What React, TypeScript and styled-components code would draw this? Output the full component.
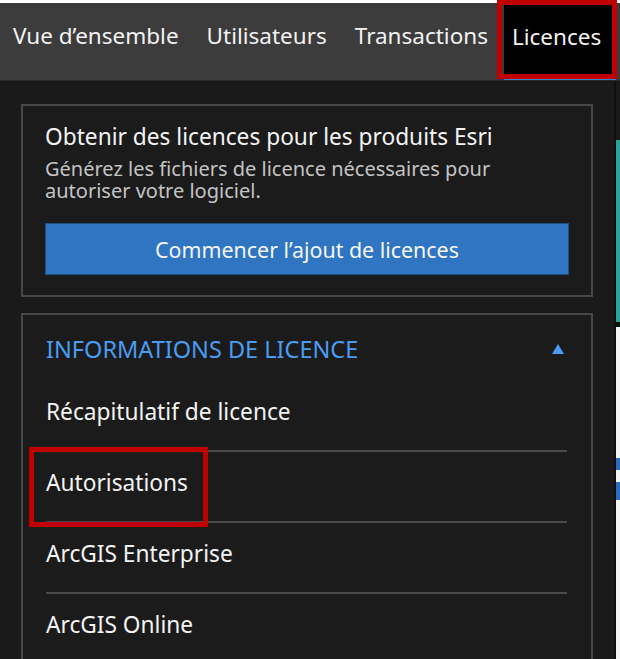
import React from "react";
import styled, { createGlobalStyle } from "styled-components";

const Global = createGlobalStyle`
  html, body { margin: 0; padding: 0; background: #1a1a1a; }
  body { font-family: "Noto Sans", "Lato", sans-serif; -webkit-font-smoothing: antialiased; }
  * { box-sizing: border-box; }
`;

const Page = styled.div`
  position: relative;
  width: 620px;
  height: 659px;
  overflow: hidden;
  background: #1a1a1a;
  display: flex;
  flex-direction: column;
`;

const Nav = styled.nav`
  flex-shrink: 0;
  display: flex;
  height: 81px;
  background: #3c3c3c;
  border-top: 3px solid #ffffff;
  border-bottom: 1px solid #2a2a2a;
`;

const Tab = styled.div<{ $active?: boolean }>`
  display: flex;
  align-items: center;
  padding: 0 14px 10px;
  font-size: 22.5px;
  color: #f2f2f2;
  white-space: nowrap;
  background: ${(p) => (p.$active ? "#000000" : "transparent")};
  border-bottom: 3px solid ${(p) => (p.$active ? "#3b82d6" : "transparent")};
  &:first-child { padding-left: 13px; }
  ${(p) => (p.$active ? "padding: 0 8px 7px 8px; margin-left: 2px; margin-right: 4px; flex: 1;" : "")}
`;

const Body = styled.div`
  flex: 1;
  display: flex;
  min-height: 0;
`;

const Main = styled.main`
  width: 614px;
  flex-shrink: 0;
  padding: 23px 21px 0;
  display: flex;
  flex-direction: column;
  gap: 16px;
`;

const Edge = styled.div`
  flex: 1;
  display: flex;
  flex-direction: column;
  background: #111;
`;

const EdgeSeg = styled.div<{ $h: number; $c: string }>`
  flex-shrink: 0;
  height: ${(p) => p.$h}px;
  border-left: 2px solid #0e0e0e;
  background: ${(p) => p.$c};
`;

const Card = styled.section<{ $open?: boolean }>`
  flex-shrink: 0;
  border: 2px solid #474747;
  background: #1b1b1b;
  ${(p) => (p.$open ? "border-bottom: none; flex: 1 0 auto;" : "")}
`;

const PromoBody = styled.div`
  padding: 17px 22px 20px;
  display: flex;
  flex-direction: column;
`;

const Title = styled.h2`
  margin: 0;
  font-size: 22.7px;
  font-weight: 400;
  line-height: 28px;
  color: #f3f3f3;
  white-space: nowrap;
`;

const Desc = styled.p`
  margin: 7px 0 0;
  font-size: 20px;
  line-height: 22px;
  color: #c4c4c4;
  max-width: 480px;
`;

const Button = styled.button`
  margin-top: 21px;
  height: 52px;
  width: 100%;
  border: 1px solid #1e4f85;
  background: #2f75c1;
  color: #f5f5f5;
  font-family: inherit;
  font-size: 21.4px;
  cursor: pointer;
`;

const AccHeader = styled.div`
  display: flex;
  align-items: center;
  justify-content: space-between;
  height: 68px;
  padding: 0 27px 0 23px;
  color: #4a9cf3;
  font-size: 23.5px;
`;

const List = styled.ul`
  list-style: none;
  margin: 0;
  padding: 0 24px 0 23px;
`;

const Item = styled.li`
  height: 71px;
  display: flex;
  align-items: center;
  padding-bottom: 9px;
  font-size: 22.7px;
  color: #f3f3f3;
  border-top: 2px solid #4a4a4a;
  &:first-child { border-top: none; height: 67px; padding-bottom: 11px; }
`;

const Highlight = styled.div<{ $x: number; $y: number; $w: number; $h: number }>`
  position: absolute;
  left: ${(p) => p.$x}px;
  top: ${(p) => p.$y}px;
  width: ${(p) => p.$w}px;
  height: ${(p) => p.$h}px;
  border: 5px solid #c00000;
  pointer-events: none;
`;

const Caret = () => (
  <svg width="12" height="10" viewBox="0 0 12 10">
    <polygon points="6,0 12,10 0,10" fill="#4a9cf3" />
  </svg>
);

export default function App() {
  return (
    <>
      <Global />
      <Page>
        <Nav>
          <Tab>Vue d’ensemble</Tab>
          <Tab>Utilisateurs</Tab>
          <Tab>Transactions</Tab>
          <Tab $active>Licences</Tab>
        </Nav>
        <Body>
          <Main>
            <Card>
              <PromoBody>
                <Title>Obtenir des licences pour les produits Esri</Title>
                <Desc>
                  Générez les fichiers de licence nécessaires pour autoriser votre logiciel.
                </Desc>
                <Button>Commencer l’ajout de licences</Button>
              </PromoBody>
            </Card>
            <Card $open>
              <AccHeader>
                <span>INFORMATIONS DE LICENCE</span>
                <Caret />
              </AccHeader>
              <List>
                <Item>Récapitulatif de licence</Item>
                <Item>Autorisations</Item>
                <Item>ArcGIS Enterprise</Item>
                <Item>ArcGIS Online</Item>
              </List>
            </Card>
          </Main>
          <Edge>
            <EdgeSeg $h={59} $c="#1a1a1a" />
            <EdgeSeg $h={182} $c="#2aa39a" />
            <EdgeSeg $h={5} $c="#0e0e0e" />
            <EdgeSeg $h={131} $c="#f4f4f4" />
            <EdgeSeg $h={12} $c="#2c6fc0" />
            <EdgeSeg $h={12} $c="#f4f4f4" />
            <EdgeSeg $h={18} $c="#2c6fc0" />
            <EdgeSeg $h={200} $c="#f4f4f4" />
          </Edge>
        </Body>
        <Highlight $x={497} $y={0} $w={120} $h={79} />
        <Highlight $x={29} $y={447} $w={179} $h={80} />
      </Page>
    </>
  );
}
